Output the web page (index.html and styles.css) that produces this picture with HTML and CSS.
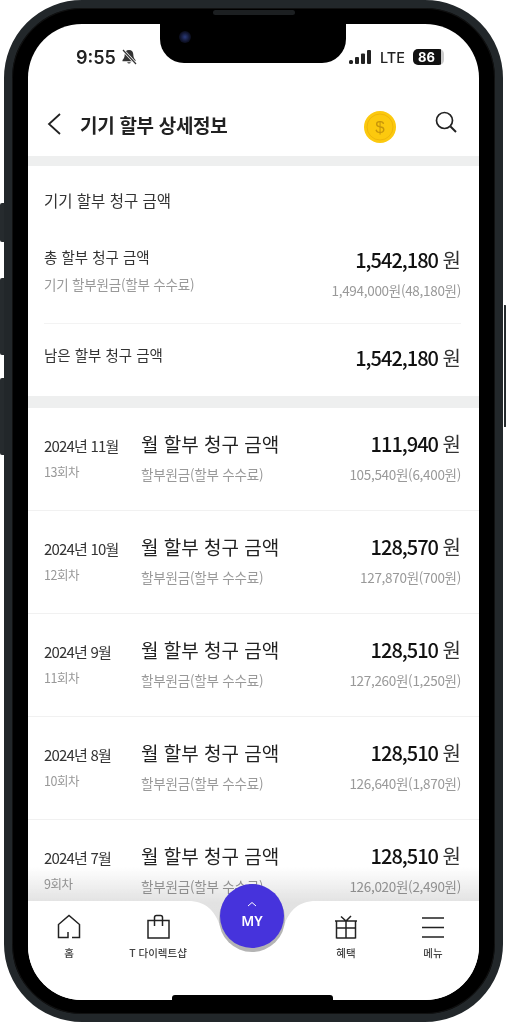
FILE: index.html
```html
<!DOCTYPE html>
<html lang="ko">
<head>
<meta charset="utf-8">
<title>기기 할부 상세정보</title>
<link rel="stylesheet" href="styles.css">
</head>
<body>
<div class="phone">
  <span class="side s1"></span><span class="side s2"></span><span class="side s3"></span><span class="side s4"></span>
  <span class="speaker"></span>
  <div class="screen">
    <div class="notch"><span class="camera"></span></div>
    <div class="status">
      <div class="status-left">
        <span class="time">9:55</span>
        <svg class="bell" width="16" height="16" viewBox="0 0 16 16"><path d="M8 1c-2.800 0-4.300 2.100-4.300 4.500 0 2.600-.9 4.200-2.200 5.500v1.200h13V11c-1.300-1.300-2.200-2.900-2.200-5.500C12.300 3.100 10.800 1 8 1z" fill="#333"/><path d="M6.200 13.200a1.900 1.900 0 0 0 3.600 0z" fill="#333"/><path d="M2 1 15 15" stroke="#fff" stroke-width="2.600"/><path d="M2 1 15 15" stroke="#333" stroke-width="1.200"/></svg>
      </div>
      <div class="status-right">
        <svg width="23" height="14" viewBox="0 0 23 14"><rect x="0" y="10" width="4" height="4" rx="1.500" fill="#222"/><rect x="6" y="7" width="4" height="7" rx="1" fill="#222"/><rect x="12" y="3.500" width="4" height="10.500" rx="1" fill="#222"/><rect x="18" y="0" width="4" height="14" rx="1" fill="#222"/></svg>
        <span class="lte">LTE</span>
        <span class="battery"><span class="batt-num">86</span></span>
      </div>
    </div>
    <header class="header">
      <svg class="back" width="16" height="24" viewBox="0 0 16 24"><path d="M14 2 3 12l11 10" fill="none" stroke="#222" stroke-width="1.800"/></svg>
      <h1 class="title">기기 할부 상세정보</h1>
      <svg class="coin" width="32" height="32" viewBox="0 0 32 32"><circle cx="16" cy="16" r="16" fill="#fcc90e"/><circle cx="16" cy="16" r="13" fill="none" stroke="#efb70a" stroke-width="1"/><text x="16" y="22" text-anchor="middle" class="coin-text">$</text></svg>
      <svg class="search" width="24" height="24" viewBox="0 0 24 24"><circle cx="10.500" cy="10.500" r="8" fill="none" stroke="#222" stroke-width="1.700"/><path d="m16.500 16.500 5.500 5.500" stroke="#222" stroke-width="2"/></svg>
    </header>
    <div class="band"></div>
    <section class="summary">
      <h2 class="summary-title">기기 할부 청구 금액</h2>
      <div class="sum-row sum-first">
        <div>
          <div class="sum-label">총 할부 청구 금액</div>
          <div class="sub sum-sub">기기 할부원금(할부 수수료)</div>
        </div>
        <div class="right">
          <div class="amount">1,542,180 <span class="won">원</span></div>
          <div class="sub sub-amount">1,494,000원(48,180원)</div>
        </div>
      </div>
      <div class="sum-row sum-second">
        <div class="sum-label">남은 할부 청구 금액</div>
        <div class="amount">1,542,180 <span class="won">원</span></div>
      </div>
    </section>
    <div class="band band-thick"></div>
    <section class="list">
      <div class="row">
        <div class="date"><div class="month">2024년 11월</div><div class="sub count">13회차</div></div>
        <div class="desc"><div class="desc-title">월 할부 청구 금액</div><div class="sub desc-sub">할부원금(할부 수수료)</div></div>
        <div class="right"><div class="amount">111,940 <span class="won">원</span></div><div class="sub sub-amount">105,540원(6,400원)</div></div>
      </div>
      <div class="row">
        <div class="date"><div class="month">2024년 10월</div><div class="sub count">12회차</div></div>
        <div class="desc"><div class="desc-title">월 할부 청구 금액</div><div class="sub desc-sub">할부원금(할부 수수료)</div></div>
        <div class="right"><div class="amount">128,570 <span class="won">원</span></div><div class="sub sub-amount">127,870원(700원)</div></div>
      </div>
      <div class="row">
        <div class="date"><div class="month">2024년 9월</div><div class="sub count">11회차</div></div>
        <div class="desc"><div class="desc-title">월 할부 청구 금액</div><div class="sub desc-sub">할부원금(할부 수수료)</div></div>
        <div class="right"><div class="amount">128,510 <span class="won">원</span></div><div class="sub sub-amount">127,260원(1,250원)</div></div>
      </div>
      <div class="row">
        <div class="date"><div class="month">2024년 8월</div><div class="sub count">10회차</div></div>
        <div class="desc"><div class="desc-title">월 할부 청구 금액</div><div class="sub desc-sub">할부원금(할부 수수료)</div></div>
        <div class="right"><div class="amount">128,510 <span class="won">원</span></div><div class="sub sub-amount">126,640원(1,870원)</div></div>
      </div>
      <div class="row">
        <div class="date"><div class="month">2024년 7월</div><div class="sub count">9회차</div></div>
        <div class="desc"><div class="desc-title">월 할부 청구 금액</div><div class="sub desc-sub">할부원금(할부 수수료)</div></div>
        <div class="right"><div class="amount">128,510 <span class="won">원</span></div><div class="sub sub-amount">126,020원(2,490원)</div></div>
      </div>
    </section>
    <nav class="tabbar">
      <svg class="tab-shape" width="451" height="99" viewBox="0 0 451 99"><path d="M0 0H160C178 0 186 10 191 22C197 39 208 49 224 49C240 49 251 39 257 22C262 10 270 0 288 0H451V99H0Z" fill="#fff"/></svg>
      <div class="tabs">
        <a class="tab">
          <svg width="26" height="26" viewBox="0 0 26 26"><path d="M12 18V23.500H2.500V10.500L13 1.500 23.500 10.500V23.500H16" fill="none" stroke="#222" stroke-width="1.500"/></svg>
          <span>홈</span>
        </a>
        <a class="tab">
          <svg width="26" height="26" viewBox="0 0 26 26"><path d="M3 6.500h21v17.500H3zM9.500 12V3.500q0-2 2-2h4q2 0 2 2V12" fill="none" stroke="#222" stroke-width="1.500"/></svg>
          <span>T 다이렉트샵</span>
        </a>
        <span class="tab-gap"></span>
        <a class="tab">
          <svg width="26" height="26" viewBox="0 0 26 26"><path d="M2 7h22M3.500 7v17.500M22.500 7v17.500M3.500 24h19M13 7v17M3.500 14h19M13 7 8 2.500M13 7l5-5" fill="none" stroke="#222" stroke-width="1.500"/></svg>
          <span>혜택</span>
        </a>
        <a class="tab">
          <svg width="26" height="26" viewBox="0 0 26 26"><path d="M2 4h22M2 13.500h22M2 23h22" fill="none" stroke="#222" stroke-width="1.500"/></svg>
          <span>메뉴</span>
        </a>
      </div>
      <div class="my">
        <svg width="10" height="6" viewBox="0 0 10 6"><path d="M1 5 5 1.500 9 5" fill="none" stroke="#fff" stroke-width="1"/></svg>
        <span>MY</span>
      </div>
    </nav>
    <div class="home-bar"></div>
  </div>
</div>
</body>
</html>
```
FILE: styles.css
```css
* { box-sizing: border-box; }
html, body { margin: 0; padding: 0; background: #fff; }
body { width: 506px; height: 1024px; overflow: hidden; font-family: "Noto Sans CJK KR", "Noto Sans", sans-serif; color: #222; }
h1, h2 { margin: 0; font-weight: inherit; }

.phone { position: relative; width: 499px; height: 1022px; margin-left: 4px; padding: 16px 16px 14px; background: #000; border: 8px solid #22272a; border-radius: 78px; box-shadow: inset 0 0 0 1px #111; }
.side { position: absolute; width: 4px; background: #262b2e; }
.s1 { left: -12px; top: 195px; height: 39px; border-radius: 2px 0 0 2px; }
.s2 { left: -12px; top: 270px; height: 77px; border-radius: 2px 0 0 2px; }
.s3 { left: -12px; top: 370px; height: 77px; border-radius: 2px 0 0 2px; }
.s4 { right: -12px; top: 297px; height: 122px; width: 3px; border-radius: 0 2px 2px 0; }
.speaker { position: absolute; left: 201px; top: 2px; width: 82px; height: 5px; background: #1c1f21; border-radius: 3px; }

.screen { position: relative; width: 451px; height: 976px; background: #fff; border-radius: 54px; overflow: hidden; }
.notch { position: absolute; left: 132px; top: 0; width: 186px; height: 39px; background: #000; border-radius: 0 0 24px 24px; }
.camera { position: absolute; left: 19px; top: 7px; width: 12px; height: 12px; border-radius: 50%; background: radial-gradient(circle, #2a3a7a 0, #10142c 55%, #000 100%); }

.status { display: flex; justify-content: space-between; align-items: center; height: 76px; padding: 0 35px 10px 48px; }
.status-left { display: flex; align-items: center; gap: 5px; }
.time { font-family: Inter, sans-serif; font-size: 18px; font-weight: 600; color: #222; }
.status-right { display: flex; align-items: center; gap: 8px; }
.lte { font-family: Inter, sans-serif; font-size: 14.500px; font-weight: 500; color: #222; }
.battery { display: flex; align-items: center; width: 31px; height: 16px; padding-right: 4px; background: linear-gradient(90deg, #111 90%, #ccc 90%); border-radius: 5px; }
.batt-num { flex: 1; text-align: center; font-family: Inter, sans-serif; font-size: 13px; font-weight: 700; line-height: 16px; color: #fff; }

.header { display: flex; align-items: center; height: 56px; padding: 0 21px 8px 18px; }
.back { flex: none; }
.title { flex: 1; margin-left: 18px; font-size: 19px; font-weight: 700; letter-spacing: -0.3px; color: #222; }
.coin { flex: none; margin: 6px 38px 0 0; }
.coin-text { font-family: "Liberation Sans", sans-serif; font-size: 17px; fill: #c8960a; }
.search { flex: none; margin-bottom: 4px; }

.band { height: 10px; background: #eeefef; }
.band-thick { height: 12px; }

.summary { height: 230px; padding: 23px 18px 0 16px; }
.summary-title { font-size: 15.500px; line-height: 22px; font-weight: 400; color: #333; }
.sum-row { display: flex; justify-content: space-between; }
.sum-first { height: 78px; margin-top: 35px; border-bottom: 1px solid #f3f3f3; }
.sum-second { padding-top: 20px; }
.sum-label { font-size: 14.500px; line-height: 22px; color: #333; }
.sum-sub { margin-top: 7px; }
.right { text-align: right; }
.amount { font-size: 20px; line-height: 28px; font-weight: 500; letter-spacing: -1px; color: #111; }
.won { font-weight: 400; letter-spacing: 0; color: #333; }
.sub { font-size: 13.500px; line-height: 18px; color: #999; letter-spacing: -0.2px; }
.sub-amount { margin-top: 7px; letter-spacing: -0.3px; }

.row { display: grid; grid-template-columns: 97px 1fr auto; height: 103px; padding: 22px 18px 0 16px; border-bottom: 1px solid #f1f1f1; }
.month { font-size: 15px; line-height: 32px; letter-spacing: -0.8px; color: #333; }
.count { margin-top: 1px; font-size: 12.500px; letter-spacing: -0.5px; }
.desc-title { font-size: 19px; line-height: 28px; color: #222; }
.desc-sub { margin-top: 7px; }

.tabbar { position: absolute; left: 0; right: 0; bottom: 0; height: 99px; }
.tabbar::before { content: ""; position: absolute; left: 0; right: 0; top: -34px; height: 84px; background: linear-gradient(to bottom, rgba(226,226,226,0), #e2e2e2 42%, #e0e0e0); mix-blend-mode: multiply; }
.tab-shape { position: absolute; left: 0; top: 0; }
.tabs { position: relative; display: grid; grid-template-columns: 82px 96px 92px 96px 78px; padding-top: 13px; }
.tab { display: flex; flex-direction: column; align-items: center; gap: 6px; font-size: 10.500px; line-height: 14px; font-weight: 500; color: #444; }
.my { position: absolute; left: 192px; top: -17px; display: flex; flex-direction: column; align-items: center; width: 64px; height: 64px; padding-top: 17px; background: #4633dc; border-radius: 50%; box-shadow: 0 3px 0 1px #b4b4b4; color: #fff; font-family: "Noto Sans", sans-serif; font-size: 14px; font-weight: 600; line-height: 20px; }
.my svg { margin-bottom: 4px; }
.home-bar { position: absolute; left: 144px; bottom: 0; width: 161px; height: 5px; background: #000; border-radius: 3px 3px 0 0; }
```
